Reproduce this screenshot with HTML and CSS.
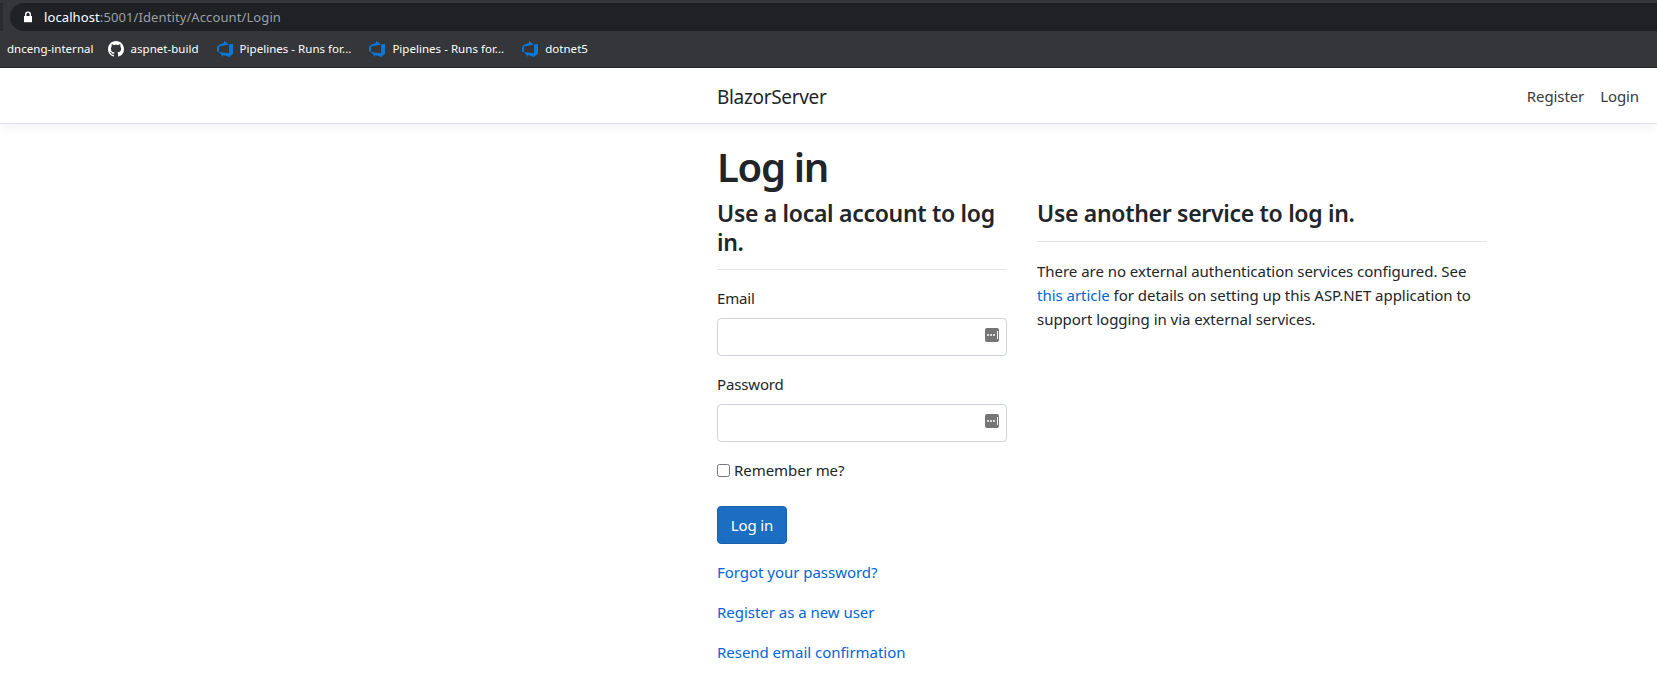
FILE: index.html
```html
<!DOCTYPE html>
<html lang="en">
<head>
<meta charset="utf-8">
<title>Log in</title>
<link rel="stylesheet" href="styles.css">
</head>
<body>
<header class="chrome">
  <div class="address-row">
    <span class="edge-stub"></span>
    <div class="address-pill">
      <svg class="lock" viewBox="0 0 10 12" width="10" height="12"><path fill="#fff" d="M1 5h8v6.2H1z"/><path fill="none" stroke="#fff" stroke-width="1.4" d="M2.7 5.5V3.4a2.3 2.3 0 0 1 4.6 0v2.1"/></svg>
      <span class="url"><span class="host">localhost</span>:5001/Identity/Account/Login</span>
    </div>
  </div>
  <nav class="bookmarks">
    <span class="bm bm-first">dnceng-internal</span>
    <span class="bm"><svg class="bm-icon" viewBox="0 0 16 16"><path fill="#fff" d="M8 0C3.58 0 0 3.58 0 8c0 3.54 2.29 6.53 5.47 7.59.4.07.55-.17.55-.38 0-.19-.01-.82-.01-1.49-2.01.37-2.53-.49-2.69-.94-.09-.23-.48-.94-.82-1.13-.28-.15-.68-.52-.01-.53.63-.01 1.08.58 1.23.82.72 1.21 1.87.87 2.33.66.07-.52.28-.87.51-1.07-1.78-.2-3.64-.89-3.64-3.95 0-.87.31-1.59.82-2.15-.08-.2-.36-1.02.08-2.12 0 0 .67-.21 2.2.82.64-.18 1.32-.27 2-.27.68 0 1.36.09 2 .27 1.53-1.04 2.2-.82 2.2-.82.44 1.1.16 1.92.08 2.12.51.56.82 1.27.82 2.15 0 3.07-1.87 3.75-3.65 3.95.29.25.54.73.54 1.48 0 1.07-.01 1.93-.01 2.2 0 .21.15.46.55.38A8.013 8.013 0 0016 8c0-4.42-3.58-8-8-8z"/></svg>aspnet-build</span>
    <span class="bm"><svg class="bm-icon" viewBox="0 0 24 24"><path fill="#0a78d4" d="M0 8.877L2.247 5.91l8.405-3.416V.022l7.37 5.393L2.966 8.338v8.225L0 15.707zm24-4.45v14.651l-5.753 4.9-9.303-3.057v3.056l-5.978-7.416 15.057 1.798V5.415z"/></svg>Pipelines - Runs for...</span>
    <span class="bm"><svg class="bm-icon" viewBox="0 0 24 24"><path fill="#0a78d4" d="M0 8.877L2.247 5.91l8.405-3.416V.022l7.37 5.393L2.966 8.338v8.225L0 15.707zm24-4.45v14.651l-5.753 4.9-9.303-3.057v3.056l-5.978-7.416 15.057 1.798V5.415z"/></svg>Pipelines - Runs for...</span>
    <span class="bm"><svg class="bm-icon" viewBox="0 0 24 24"><path fill="#0a78d4" d="M0 8.877L2.247 5.91l8.405-3.416V.022l7.37 5.393L2.966 8.338v8.225L0 15.707zm24-4.45v14.651l-5.753 4.9-9.303-3.057v3.056l-5.978-7.416 15.057 1.798V5.415z"/></svg>dotnet5</span>
  </nav>
</header>

<div class="navbar">
  <a class="brand" href="#">BlazorServer</a>
  <div class="nav-links">
    <a class="nav-link" href="#">Register</a>
    <a class="nav-link" href="#">Login</a>
  </div>
</div>

<main class="page">
  <h1 class="title">Log in</h1>
  <div class="columns">
    <section class="col-local">
      <h4 class="subtitle">Use a local account to log in.</h4>
      <hr class="rule rule-local">
      <div class="field">
        <label class="field-label" for="email">Email</label>
        <div class="input-wrap">
          <input class="input" id="email" type="text">
          <span class="key-icon"><i class="dot"></i><i class="dot"></i><i class="dot"></i><i class="bar"></i></span>
        </div>
      </div>
      <div class="field">
        <label class="field-label" for="password">Password</label>
        <div class="input-wrap">
          <input class="input" id="password" type="password">
          <span class="key-icon"><i class="dot"></i><i class="dot"></i><i class="dot"></i><i class="bar"></i></span>
        </div>
      </div>
      <div class="check-row">
        <label class="check-label"><input class="check" type="checkbox">Remember me?</label>
      </div>
      <button class="btn" type="button">Log in</button>
      <p class="link-row"><a class="link" href="#">Forgot your password?</a></p>
      <p class="link-row"><a class="link" href="#">Register as a new user</a></p>
      <p class="link-row"><a class="link" href="#">Resend email confirmation</a></p>
    </section>
    <section class="col-external">
      <h4 class="subtitle">Use another service to log in.</h4>
      <hr class="rule rule-external">
      <p class="body-text">There are no external authentication services configured. See <a class="link-article" href="#">this article</a> for details on setting up this ASP.NET application to support logging in via external services.</p>
    </section>
  </div>
</main>
</body>
</html>
```
FILE: styles.css
```css
* { box-sizing: border-box; }
html, body { margin: 0; padding: 0; }
body {
  height: 698px;
  overflow: hidden;
  background: #fff;
  color: #212529;
  font-family: "Noto Sans", "Open Sans", sans-serif;
  font-size: 15px;
  line-height: 24px;
}
a { text-decoration: none; }

/* browser chrome */
.chrome { height: 68px; background: #35363a; border-bottom: 1px solid #26272a; }
.address-row { display: flex; height: 31px; padding-top: 3px; }
.edge-stub { width: 3px; background: #2a2b2e; margin-right: 7px; }
.address-pill {
  flex: 1;
  display: flex;
  align-items: center;
  background: #202124;
  border-radius: 14px 0 0 14px;
  padding-left: 13px;
}
.lock { margin-right: 11px; }
.url { color: #9aa0a6; font-size: 13px; line-height: 28px; letter-spacing: 0.1px; }
.host { color: #fff; }
.bookmarks { display: flex; align-items: center; height: 36px; padding-left: 7px; }
.bm {
  display: flex;
  align-items: center;
  color: #fff;
  font-size: 11.5px;
  line-height: 16px;
  letter-spacing: 0.03px;
  margin-right: 18px;
  white-space: nowrap;
}
.bm-first { margin-right: 14px; }
.bm-icon { width: 16px; height: 16px; margin-right: 7px; flex: none; }

/* app navbar */
.navbar {
  height: 56px;
  display: flex;
  align-items: center;
  justify-content: space-between;
  padding: 0 18px 0 717px;
  background: #fff;
  border-bottom: 1px solid #dde0e6;
  box-shadow: 0 4px 12px rgba(0, 0, 0, .05);
}
.brand { color: #212529; font-size: 19px; letter-spacing: -0.33px; padding-top: 2px; }
.nav-links { display: flex; gap: 16px; padding-top: 1px; }
.nav-link { color: #343a40; font-size: 15px; letter-spacing: -0.1px; }

/* content */
.page { padding: 19px 0 0 717px; }
.title { margin: 0 0 8px; font-size: 40px; line-height: 48px; font-weight: 600; letter-spacing: -1.3px; }
.columns { display: grid; grid-template-columns: 290px 450px; column-gap: 30px; }
.subtitle { margin: 0; font-size: 23px; line-height: 28.8px; font-weight: 600; letter-spacing: -0.3px; }
.rule { border: 0; border-top: 1px solid rgba(0, 0, 0, .1); margin: 0; }
.rule-local { margin: 12px 0 16.5px; }
.rule-external { margin: 13px 0 17px; }

.field { margin-bottom: 16px; }
.field-label { display: block; margin-bottom: 8px; letter-spacing: -0.15px; }
.input-wrap { position: relative; height: 38px; }
.input {
  display: block;
  width: 100%;
  height: 38px;
  border: 1px solid #ced4da;
  border-radius: 4px;
  background: #fff;
  outline: 0;
}
.key-icon {
  position: absolute;
  right: 8px;
  top: 10px;
  width: 14px;
  height: 14px;
  border-radius: 2px;
  background: #757575;
  display: flex;
  align-items: center;
  justify-content: flex-end;
  gap: 1px;
  padding-right: 1px;
}
.dot { width: 2px; height: 2px; border-radius: 50%; background: #fff; }
.bar { width: 1px; height: 8px; background: #fff; margin-left: 1px; }

.check-row { margin-bottom: 16px; height: 32px; }
.check-label { display: inline-flex; align-items: center; letter-spacing: -0.05px; }
.check { width: 13px; height: 13px; margin: 0 4px 0 0; }
.btn {
  display: block;
  width: 70px;
  height: 38px;
  padding: 0;
  margin-bottom: 16px;
  color: #fff;
  background: #1b6ec2;
  border: 1px solid #1861ac;
  border-radius: 4px;
  font: inherit;
  letter-spacing: -0.1px;
}
.link-row { margin: 0 0 16px; }
.link { color: #0366d6; letter-spacing: -0.03px; }
.body-text { margin: 0; letter-spacing: -0.03px; }
.link-article { color: #0366d6; }
```
